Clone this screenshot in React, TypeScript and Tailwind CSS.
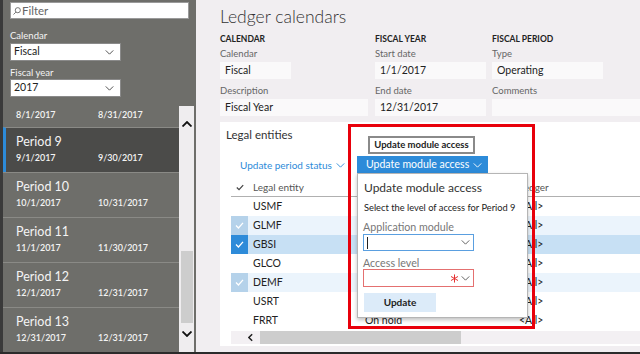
import React from 'react';

type Period = { name: string; start: string; end: string; active?: boolean };

const periods: Period[] = [
  { name: 'Period 9', start: '9/1/2017', end: '9/30/2017', active: true },
  { name: 'Period 10', start: '10/1/2017', end: '10/31/2017' },
  { name: 'Period 11', start: '11/1/2017', end: '11/30/2017' },
  { name: 'Period 12', start: '12/1/2017', end: '12/31/2017' },
  { name: 'Period 13', start: '12/31/2017', end: '12/31/2017' },
];

type Entity = { id: string; status: string; mark?: 'light' | 'selected' };

const entities: Entity[] = [
  { id: 'USMF', status: 'Open' },
  { id: 'GLMF', status: 'Open', mark: 'light' },
  { id: 'GBSI', status: 'Open', mark: 'selected' },
  { id: 'GLCO', status: 'Open' },
  { id: 'DEMF', status: 'Open', mark: 'light' },
  { id: 'USRT', status: 'Open' },
  { id: 'FRRT', status: 'On hold' },
];

const Chev = ({ className = '' }: { className?: string }) => (
  <svg viewBox="0 0 10 6" className={className} fill="none" stroke="currentColor" strokeWidth={1.1}>
    <polyline points="0.5,0.5 5,5 9.5,0.5" />
  </svg>
);

const Check = ({ className = '' }: { className?: string }) => (
  <svg viewBox="0 0 10 8" className={className} fill="none" stroke="currentColor" strokeWidth={1.5}>
    <polyline points="1,4 3.8,6.8 9,1" />
  </svg>
);

const Field = ({ label, value, width }: { label: string; value: string; width: string }) => (
  <div>
    <div className="text-[9.5px] leading-[13px] text-[#666]">{label}</div>
    <div className={`${width} h-[17px] mt-[2px] bg-[#faf9fa] pl-[5px] text-[10.5px] leading-[17px] text-[#222]`}>
      {value}
    </div>
  </div>
);

const Sidebar = () => (
  <aside className="w-[196px] h-full flex bg-[#6e6e6a] text-[#f4f4f4]">
    <div className="w-[3px] h-full bg-[#3a3a3a]" />
    <div className="flex-1 flex flex-col">
      <div className="pl-[7px] pt-[2px]">
        <div className="h-[17px] w-[179px] bg-white border border-[#9a9a9a] flex items-center pl-[2px] gap-[1px]">
          <svg viewBox="0 0 10 10" className="w-[8px] h-[8px] text-[#555]" fill="none" stroke="currentColor" strokeWidth={1}>
            <circle cx="6" cy="4" r="3.2" />
            <line x1="3.6" y1="6.4" x2="0.6" y2="9.4" />
          </svg>
          <span className="text-[11.5px] text-[#666]">Filter</span>
        </div>
        <div className="mt-[10px] text-[9.5px] leading-[13px]">Calendar</div>
        <div className="mt-[1px] w-[111px] h-[18px] bg-white border border-[#8a8a8a] flex items-center justify-between pl-[3px] pr-[6px] text-[10.5px] text-[#222]">
          <span>Fiscal</span>
          <Chev className="w-[9px] h-[5px] text-[#444]" />
        </div>
        <div className="mt-[5px] text-[9.5px] leading-[13px]">Fiscal year</div>
        <div className="w-[111px] h-[18px] bg-white border border-[#8a8a8a] flex items-center justify-between pl-[3px] pr-[6px] text-[10.5px] text-[#222]">
          <span>2017</span>
          <Chev className="w-[9px] h-[5px] text-[#444]" />
        </div>
      </div>
      <div className="mt-[7px] flex flex-1 overflow-hidden">
        <div className="w-[176px] flex flex-col">
          <div className="h-[24px] pt-[4px] pl-[13px] flex text-[9px] leading-[13px] font-semibold">
            <span className="w-[82px]">8/1/2017</span>
            <span>8/31/2017</span>
          </div>
          {periods.map((p) => (
            <div
              key={p.name}
              className={`h-[45px] shrink-0 border-t border-[#8a8a86] pt-[5px] ${
                p.active ? 'bg-[#4b4b49] border-l-[3px] border-l-[#2d8bd9] pl-[10px]' : 'pl-[13px]'
              }`}
            >
              <div className="text-[12.5px] leading-[18px]">{p.name}</div>
              <div className="flex text-[9px] leading-[13px] font-semibold">
                <span className="w-[82px]">{p.start}</span>
                <span>{p.end}</span>
              </div>
            </div>
          ))}
        </div>
        <div className="w-[15px] mt-[2px] bg-[#efedef] flex flex-col items-center">
          <Chev className="mt-[15px] w-[10px] h-[6px] text-[#111] rotate-180 [stroke-width:1.8]" />
          <div className="mt-[124px] w-[12px] h-[72px] bg-[#cdcdcd]" />
          <Chev className="mt-[8px] w-[10px] h-[6px] text-[#111] [stroke-width:1.8]" />
        </div>
      </div>
    </div>
  </aside>
);

const Table = () => (
  <div className="ml-[11px] mt-[4px]">
    <div className="h-[19px] flex items-center border-b border-[#b0b0b0] text-[10px] text-[#555]">
      <div className="w-[17px] flex justify-center">
        <Check className="w-[8px] h-[7px] text-[#444]" />
      </div>
      <div className="pl-[5px] w-[117px]">Legal entity</div>
      <div className="w-[154px]">Status</div>
      <div>Ledger</div>
    </div>
    {entities.map((e) => (
      <div
        key={e.id}
        className={`h-[19px] flex items-center text-[10.5px] text-[#222] ${
          e.mark === 'selected' ? 'bg-[#c7e0f4]' : e.mark === 'light' ? 'bg-[#ebf4fc]' : 'bg-white'
        }`}
      >
        <div
          className={`w-[17px] h-full flex items-center justify-center ${
            e.mark === 'selected' ? 'bg-[#2d8bd9]' : e.mark === 'light' ? 'bg-[#b5d2ea]' : ''
          }`}
        >
          {e.mark && <Check className="w-[9px] h-[7px] text-white" />}
        </div>
        <div className="pl-[5px] w-[117px]">{e.id}</div>
        <div className="w-[154px]">{e.status}</div>
        <div>&lt;All&gt;</div>
      </div>
    ))}
    <div className="mt-[1px] h-[13px] bg-[#f3f0f3] flex items-center">
      <svg viewBox="0 0 6 10" className="ml-[17px] w-[5px] h-[9px] text-[#222]" fill="none" stroke="currentColor" strokeWidth={1.8}>
        <polyline points="5,1 1,5 5,9" />
      </svg>
      <div className="ml-[7px] w-[201px] h-full bg-[#cdcdcd]" />
    </div>
  </div>
);

export default function App() {
  return (
    <div className="relative w-[640px] h-[354px] overflow-hidden flex flex-col [font-family:Lato,'Noto_Sans',sans-serif]">
      <div className="h-[352px] flex">
        <Sidebar />
        <main className="flex-1 h-full bg-[#f1eef1] pl-[24px] flex flex-col">
          <h1 className="pt-[5px] text-[17.5px] leading-[24px] font-light text-[#333]">Ledger calendars</h1>
          <div className="mt-[4px] flex">
            <div className="w-[148px] mr-[7px]">
              <div className="text-[8.5px] leading-[12px] font-bold text-[#222]">CALENDAR</div>
              <div className="mt-[2px]">
                <Field label="Calendar" value="Fiscal" width="w-[71px]" />
              </div>
              <div className="mt-[5px]">
                <Field label="Description" value="Fiscal Year" width="w-[148px]" />
              </div>
            </div>
            <div className="w-[111px] mr-[6px]">
              <div className="text-[8.5px] leading-[12px] font-bold text-[#222]">FISCAL YEAR</div>
              <div className="mt-[2px]">
                <Field label="Start date" value="1/1/2017" width="w-[111px]" />
              </div>
              <div className="mt-[5px]">
                <Field label="End date" value="12/31/2017" width="w-[111px]" />
              </div>
            </div>
            <div className="flex-1">
              <div className="text-[8.5px] leading-[12px] font-bold text-[#222]">FISCAL PERIOD</div>
              <div className="mt-[2px]">
                <Field label="Type" value="Operating" width="w-[111px]" />
              </div>
              <div className="mt-[5px]">
                <Field label="Comments" value="" width="w-full" />
              </div>
            </div>
          </div>
          <section className="mt-[6px] h-[224px] bg-white pt-[5px]">
            <h2 className="pl-[6px] text-[11.5px] leading-[16px] text-[#333]">Legal entities</h2>
            <div className="mt-[13px] h-[18px] flex items-center">
              <div className="ml-[20px] w-[117px] flex items-center gap-[4px] whitespace-nowrap text-[10px] text-[#2d8bd9]">
                Update period status
                <Chev className="w-[9px] h-[5px]" />
              </div>
              <div className="w-[131px] h-[18px] bg-[#2d8bd9] text-white text-[10.5px] whitespace-nowrap flex items-center pl-[9px] gap-[4px]">
                Update module access
                <Chev className="w-[9px] h-[5px]" />
              </div>
            </div>
            <Table />
          </section>
        </main>
      </div>
      <div className="h-[2px] bg-[#2b2b2b]" />

      {/* tooltip over the button */}
      <div className="absolute left-[368px] top-[136px] w-[107px] h-[18px] bg-white border-2 border-[#8a8a8a] flex items-center justify-center whitespace-nowrap text-[9.5px] font-bold text-[#222]">
        Update module access
      </div>

      {/* dropdown */}
      <div className="absolute left-[357px] top-[173px] w-[171px] h-[145px] bg-white border border-[#b5b5b5] shadow-[0_2px_4px_rgba(0,0,0,0.25)] pl-[5px] pt-[5px]">
        <div className="pl-[1px] text-[12px] leading-[18px] text-[#333]">Update module access</div>
        <div className="pl-[1px] mt-[4px] whitespace-nowrap text-[9.3px] leading-[13px] text-[#222]">Select the level of access for Period 9</div>
        <div className="mt-[6px] text-[10.7px] leading-[13px] text-[#777]">Application module</div>
        <div className="mt-[1px] w-[111px] h-[17px] border border-[#5a9fe0] flex items-center justify-between pl-[3px] pr-[3px]">
          <div className="w-[1px] h-[12px] bg-[#222]" />
          <Chev className="w-[9px] h-[5px] text-[#555]" />
        </div>
        <div className="mt-[5px] text-[10.7px] leading-[13px] text-[#777]">Access level</div>
        <div className="w-[111px] h-[18px] border border-[#e47070] flex items-center justify-end pr-[3px] gap-[2px]">
          <svg viewBox="0 0 10 10" className="w-[9px] h-[9px] text-[#e53030]" fill="none" stroke="currentColor" strokeWidth={1.1}>
            <line x1="5" y1="0.5" x2="5" y2="9.5" />
            <line x1="1.1" y1="2.75" x2="8.9" y2="7.25" />
            <line x1="1.1" y1="7.25" x2="8.9" y2="2.75" />
          </svg>
          <Chev className="w-[9px] h-[5px] text-[#555]" />
        </div>
        <div className="mt-[6px] ml-[1px] w-[72px] h-[19px] bg-[#dcebf9] flex items-center justify-center text-[10px] font-bold text-[#222]">
          Update
        </div>
      </div>

      {/* annotation frame */}
      <div className="absolute left-[348px] top-[124px] w-[187px] h-[205px] border-[3px] border-[#e8000b]" />
    </div>
  );
}
